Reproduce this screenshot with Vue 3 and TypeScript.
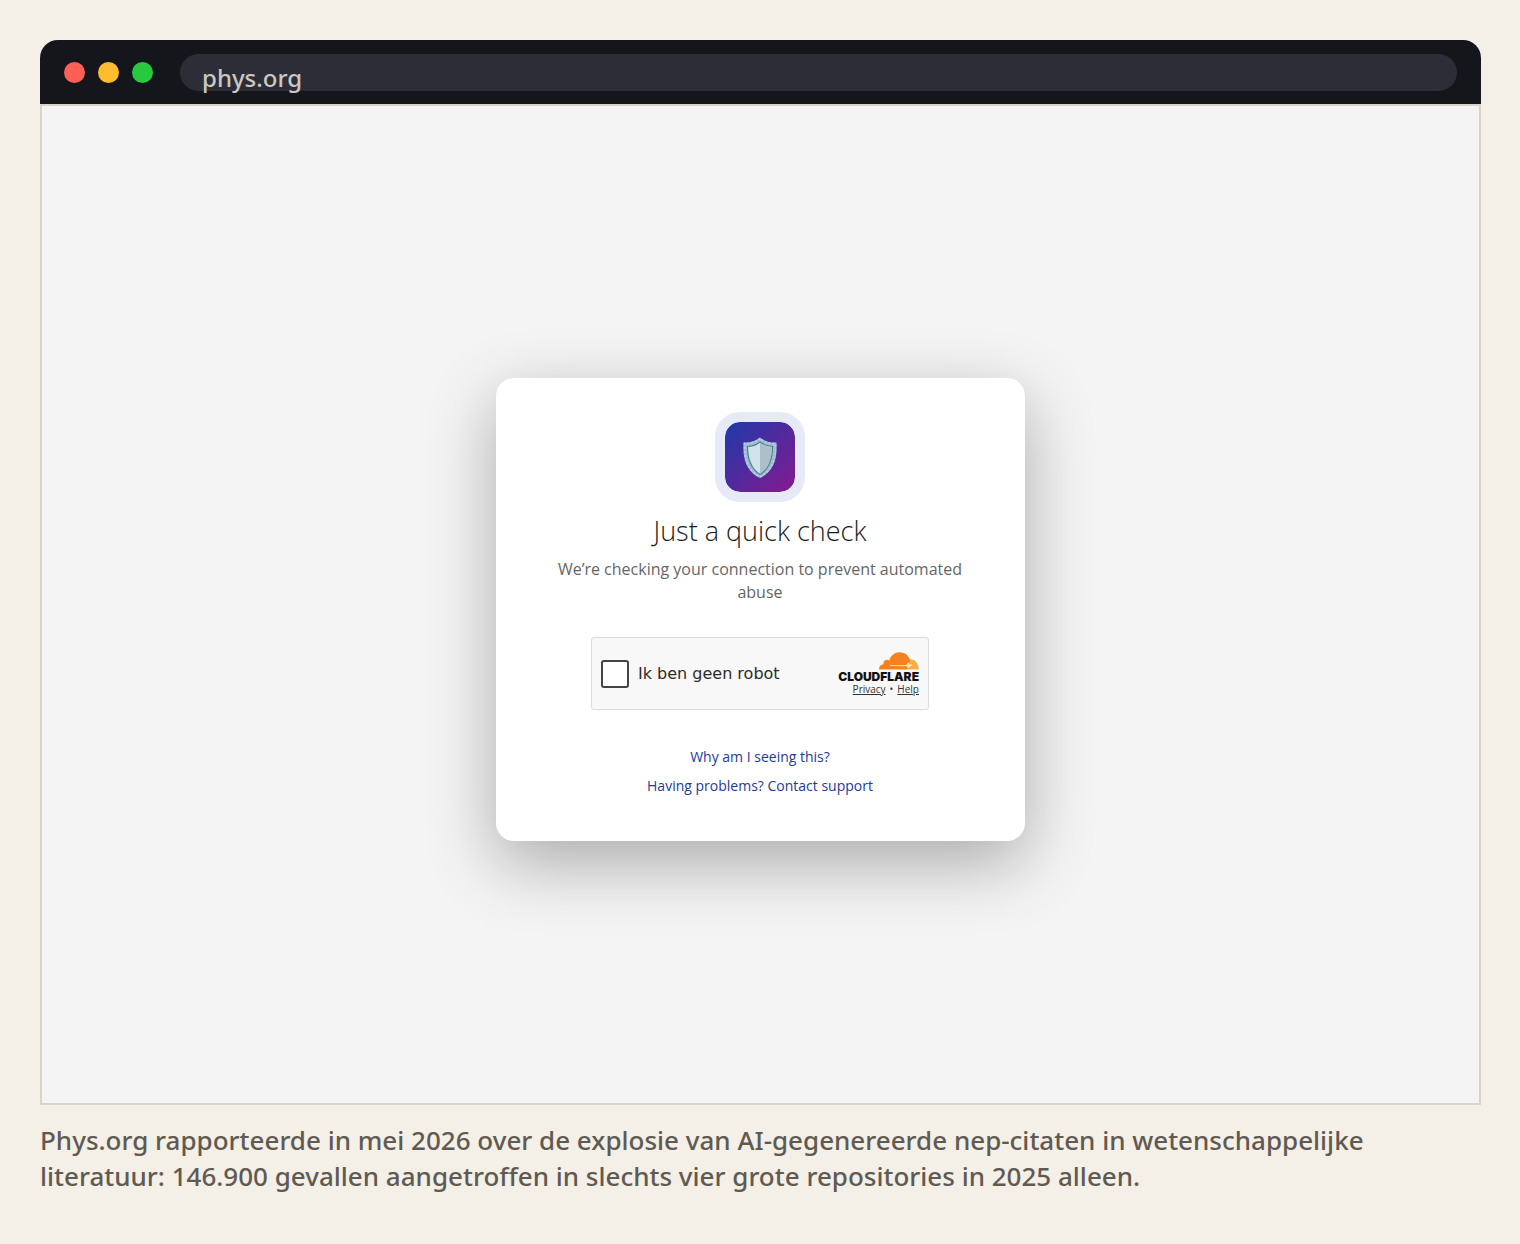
<script setup lang="ts">
const address = 'phys.org'
const lights: string[] = ['red', 'amber', 'green']
const links: string[] = ['Why am I seeing this?', 'Having problems? Contact support']
</script>

<template>
  <figure class="page">
    <div class="window">
      <header class="bar">
        <div class="lights">
          <span v-for="c in lights" :key="c" class="light" :class="c"></span>
        </div>
        <div class="pill">
          <input class="address" type="text" aria-label="Address" :value="address" readonly />
        </div>
      </header>
      <main class="viewport">
        <section class="card">
          <div class="badge">
            <svg viewBox="0 0 36 44" width="36" height="44" aria-hidden="true">
              <path d="M18 2.500C13 6.500 7.500 8 1.500 7.500C.5 24 4.500 36.500 18 43C31.500 36.500 35.500 24 34.500 7.500C28.500 8 23 6.500 18 2.500Z" fill="#9dbbd2" />
              <path d="M18 3.500C13 7.500 8 9 2.500 8.500C2 24 5.500 35.500 18 42C30.500 35.500 34 24 33.500 8.500C28 9 23 7.500 18 3.500Z" fill="none" stroke="#c3cde4" stroke-width="1.500" stroke-dasharray="2 2" />
              <path d="M18 7C14 10 10 11.500 5.500 11.500C5.500 24 8.500 33.500 18 39.500C27.500 33.500 30.500 24 30.500 11.500C26 11.500 22 10 18 7Z" fill="#cfe3e8" stroke="#4d8292" stroke-width="1.200" />
              <path d="M18 8C22 10.800 25.500 12 29.800 12.200C29.600 24 27 32.800 18 38.700Z" fill="#adbfc8" />
            </svg>
          </div>
          <h1>Just a quick check</h1>
          <p class="lead">We’re checking your connection to prevent automated abuse</p>
          <div class="widget">
            <label class="check">
              <input type="checkbox" />
              <span>Ik ben geen robot</span>
            </label>
            <div class="brand">
              <svg class="cloud" viewBox="0 0 40 18" width="40" height="18" aria-hidden="true">
                <path d="M28.500 17.500L29.500 7.300C35.500 6.500 40 11 39.600 17.500Z" fill="#fbad41" />
                <path d="M0 17.500C-.2 14.500 1.800 12.300 4.500 12.200C3.800 8.800 7.500 6.600 10.300 8.400C11.700 3.500 15.800 .3 20.600 .3C26.300 .3 30.300 4.200 31.300 9.200C30.500 11 29.500 14.500 28.500 17.500Z" fill="#f6821f" />
                <path d="M11 13.200L27.200 12.900L29.400 10L31 12.600L34 12.500L31 14.500L29 16.800L27.600 14.200L11 13.900Z" fill="#fff" opacity=".75" />
              </svg>
              <span class="wordmark">CLOUDFLARE</span>
              <span class="legal"><a href="#">Privacy</a><span>•</span><a href="#">Help</a></span>
            </div>
          </div>
          <nav class="links">
            <a v-for="l in links" :key="l" href="#">{{ l }}</a>
          </nav>
        </section>
      </main>
    </div>
    <figcaption>
      Phys.org rapporteerde in mei 2026 over de explosie van AI-gegenereerde nep-citaten in wetenschappelijke
      literatuur: 146.900 gevallen aangetroffen in slechts vier grote repositories in 2025 alleen.
    </figcaption>
  </figure>
</template>

<style>
body {
  margin: 0;
  background: #f4efe7;
}
</style>

<style scoped>
.page {
  box-sizing: border-box;
  display: flex;
  flex-direction: column;
  min-height: 100vh;
  margin: 0;
  padding: 40px 39px 50px 40px;
  font-family: "Noto Sans", "Open Sans", sans-serif;
}
.window {
  flex: 1;
  display: flex;
  flex-direction: column;
}
.bar {
  display: flex;
  align-items: center;
  gap: 27px;
  padding: 14px 24px 13px;
  border-radius: 18px 18px 0 0;
  background: #14161b;
}
.lights {
  display: flex;
  gap: 13px;
}
.light {
  width: 21px;
  height: 21px;
  border-radius: 50%;
}
.red { background: #ff5f57; }
.amber { background: #febc2e; }
.green { background: #28c840; }
.pill {
  display: flex;
  align-items: flex-start;
  flex: 1;
  min-width: 0;
  height: 37px;
  border-radius: 19px;
  background: #2d2d37;
}
.address {
  box-sizing: border-box;
  flex: 1;
  min-width: 0;
  height: 46px;
  padding: 0 22px;
  border: 0;
  outline: 0;
  background: transparent;
  color: #ccc8c2;
  font: 500 24px/32px "Noto Sans", sans-serif;
}
.viewport {
  flex: 1;
  display: flex;
  align-items: center;
  justify-content: center;
  padding: 10px 1px 0 0;
  border: 2px solid #d9d5c6;
  background: #f4f4f4;
}
.card {
  box-sizing: border-box;
  display: flex;
  flex-direction: column;
  align-items: center;
  width: 529px;
  padding: 34px 45px;
  border-radius: 18px;
  background: #fff;
  box-shadow: 0 22px 68px rgba(0, 0, 0, 0.3);
  font-family: "Open Sans", "Noto Sans", sans-serif;
}
.badge {
  display: flex;
  align-items: center;
  justify-content: center;
  width: 70px;
  height: 70px;
  border: 10px solid #e5eaf6;
  border-radius: 25px;
  background: linear-gradient(135deg, #1e3aaa, #86198f) padding-box;
}
h1 {
  margin: 9px 0 7px;
  color: #1c1c1c;
  font-size: 27px;
  font-weight: 300;
  line-height: 40px;
}
.lead {
  margin: 0;
  color: #666;
  font-size: 16px;
  line-height: 23px;
  text-align: center;
}
.widget {
  box-sizing: border-box;
  display: flex;
  align-items: center;
  justify-content: space-between;
  width: 338px;
  height: 73px;
  margin: 33px 0;
  padding: 0 9px;
  border: 1px solid #dcdcdc;
  border-radius: 3px;
  background: #f8f8f8;
}
.check {
  display: flex;
  align-items: center;
  gap: 9px;
  color: #2c2c2c;
  font-size: 16px;
  font-family: "DejaVu Sans", sans-serif;
}
.check input {
  appearance: none;
  box-sizing: border-box;
  width: 28px;
  height: 28px;
  margin: 0;
  border: 2px solid #444;
  border-radius: 3px;
  background: #fff;
}
.brand {
  display: flex;
  flex-direction: column;
  align-items: flex-end;
}
.wordmark {
  color: #111;
  font: 900 12px/13px Inter, sans-serif;
}
.legal {
  display: flex;
  gap: 4px;
  color: #333;
  font-size: 10px;
  line-height: 12px;
}
.legal a {
  color: inherit;
}
.links {
  display: flex;
  flex-direction: column;
  align-items: center;
  gap: 9px;
  margin: 4px 0 11px;
}
.links a {
  color: #1e3a9a;
  font-size: 14px;
  line-height: 20px;
  text-decoration: none;
}
figcaption {
  margin-top: 17px;
  color: #5f5a52;
  font-size: 26px;
  font-weight: 500;
  line-height: 36px;
}
</style>
